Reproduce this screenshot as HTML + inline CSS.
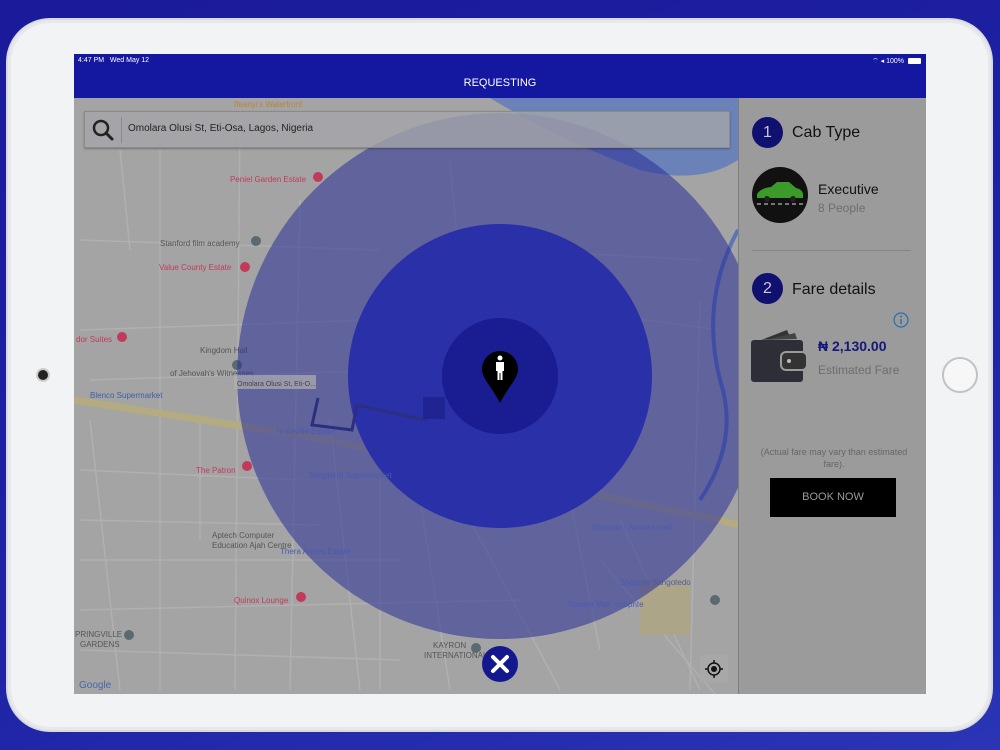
<!DOCTYPE html>
<html><head><meta charset="utf-8">
<style>
*{margin:0;padding:0;box-sizing:border-box}
html,body{width:1000px;height:750px;overflow:hidden;font-family:"Liberation Sans",sans-serif}
body{background:linear-gradient(160deg,#1a1a9a 0%,#1f23a6 60%,#2a35b5 100%);position:relative}
.ipad{position:absolute;left:8px;top:20px;width:983px;height:710px;background:#f2f3f5;border-radius:42px;box-shadow:0 0 0 2px #d8dae0,inset 0 0 0 3px #e6e8ec}
.cam{position:absolute;left:30px;top:350px;width:10px;height:10px;border-radius:50%;background:#222;box-shadow:0 0 0 2px #ccc}
.home{position:absolute;left:934px;top:337px;width:36px;height:36px;border-radius:50%;border:2px solid #bfc2c8;background:#f7f7f7}
.screen{position:absolute;left:74px;top:54px;width:852px;height:640px;overflow:hidden;background:#a6a6a6}
.bar{position:absolute;left:0;top:0;width:852px;height:44px;background:#1418a0;color:#fff}
.status{position:absolute;top:3px;font-size:7px}
.title{position:absolute;top:23px;width:100%;text-align:center;font-size:11px}
.map{position:absolute;left:0;top:44px;width:664px;height:596px;overflow:hidden}
.side{position:absolute;left:664px;top:44px;width:188px;height:596px;background:#9b9b9b;border-left:1px solid #7d7d7d}
.num{position:absolute;width:31px;height:31px;border-radius:50%;background:#101070;color:#c8c8d8;font-size:16px;text-align:center;line-height:31px}
.h{position:absolute;font-size:16px;color:#111;font-weight:500}
.search{position:absolute;left:10px;top:13px;width:646px;height:37px;background:rgba(165,165,170,.8);border:1px solid #8a8a8a;box-shadow:0 1px 2px rgba(0,0,0,.3)}
</style></head><body>
<div class="ipad"><div class="cam"></div><div class="home"></div></div>
<div class="screen">
 <div class="map">
  <svg width="664" height="596" viewBox="74 98 664 596" style="position:absolute;left:0;top:0" font-family="Liberation Sans">
   <rect x="74" y="98" width="664" height="596" fill="#a4a4a4"/>
   <g stroke="#b0b0b0" stroke-width="1.5" fill="none">
    <path d="M160 150 L160 690 M240 110 L235 690 M300 200 L290 690 M80 240 L380 250 M80 330 L370 320 M90 380 L400 370 M80 470 L300 480 M80 520 L320 525 M80 560 L400 560 M80 610 L520 600 M80 650 L400 660 M380 480 L380 690 M420 500 L450 690 M560 450 L600 650 M620 520 L700 690 M120 150 L130 250 M200 420 L200 540 M330 420 L360 690 M450 160 L470 380 M520 250 L700 260 M500 300 L720 330 M600 560 L720 700 M700 300 L690 690 M90 420 L120 690 M470 520 L560 690"/>
   </g>
   <path d="M74 400 L300 435 L720 520 L738 525" stroke="#b5ab80" stroke-width="7" fill="none"/>
   <path d="M490 98 Q560 140 640 170 Q700 185 738 160 L738 98 Z" fill="#6a82b8"/>
   <path d="M738 230 Q700 300 720 380 Q740 440 700 500" stroke="#5a74b4" stroke-width="4" fill="none"/>
   <rect x="640" y="580" width="50" height="55" fill="#aca587"/>
   <g font-size="8" fill="#555">
    <text x="160" y="246">Stanford film academy</text>
    <text x="200" y="353">Kingdom Hall</text><text x="170" y="376">of Jehovah's Witnesses...</text>
    <text x="90" y="398" fill="#3a5fa8">Blenco Supermarket</text>
    <text x="212" y="538">Aptech Computer</text><text x="212" y="548">Education Ajah Centre</text>
    <text x="433" y="648">KAYRON</text><text x="424" y="658">INTERNATIONAL</text>
    <text x="75" y="637">PRINGVILLE</text><text x="80" y="647">GARDENS</text>
   </g>
   <g font-size="8" fill="#c23a5a">
    <text x="230" y="182">Peniel Garden Estate</text>
    <text x="159" y="270">Value County Estate</text>
    <text x="76" y="342">dor Suites</text>
    <text x="196" y="473">The Patron</text>
    <text x="234" y="603">Quinox Lounge</text>
    <text x="234" y="107" fill="#b9843a">Ifeanyi's Waterfront</text>
   </g>
   <g fill="#c23a5a"><circle cx="318" cy="177" r="5"/><circle cx="245" cy="267" r="5"/><circle cx="122" cy="337" r="5"/><circle cx="247" cy="466" r="5"/><circle cx="301" cy="597" r="5"/></g>
   <g fill="#5a6a70"><circle cx="256" cy="241" r="5"/><circle cx="237" cy="365" r="5"/><circle cx="129" cy="635" r="5"/><circle cx="476" cy="648" r="5"/><circle cx="715" cy="600" r="5"/></g>
   <text x="79" y="688" font-size="10" fill="#4466aa">Google</text>
   <circle cx="500" cy="376" r="263" fill="#2a2e98" fill-opacity="0.55"/>
   <circle cx="500" cy="376" r="152" fill="#2a30a8"/>
   <circle cx="500" cy="376" r="58" fill="#1a1d92"/>
   <g font-size="8" fill="#4a5ab0">
    <text x="308" y="478">Templehill Supermarket</text>
    <text x="280" y="554">Thera Annex Estate</text>
    <text x="276" y="434">Hopeville Estate</text>
    <text x="592" y="530">Shoprite - Novare mall</text>
    <text x="620" y="585">Shoprite Sangotedo</text>
    <text x="568" y="607">Novare Mall, shoprite</text>
   </g>
   <path d="M318 398 L312 425 L352 430 L357 405 L425 420 L428 400" stroke="#2a2f80" stroke-width="3" fill="none"/>
   <rect x="423" y="397" width="22" height="22" fill="#1f2490"/>
   <rect x="234" y="375" width="82" height="14" fill="#b0b0b0" fill-opacity=".7"/>
   <text x="237" y="386" font-size="7" fill="#444">Omolara Olusi St, Eti-O...</text>
   <path d="M500 351 a18 18 0 0 1 18 18 c0 10 -10 18 -18 34 c-8 -16 -18 -24 -18 -34 a18 18 0 0 1 18 -18z" fill="#000"/>
   <circle cx="500" cy="358" r="2.5" fill="#fff"/>
   <path d="M496 362 h8 v9 h-1.5 v9 h-2 v-7 h-1 v7 h-2 v-9 h-1.5z" fill="#fff"/>
   <circle cx="500" cy="664" r="18" fill="#14188e"/>
   <path d="M493 657 L507 671 M507 657 L493 671" stroke="#fff" stroke-width="4" stroke-linecap="round"/>
   <rect x="700" y="655" width="28" height="28" fill="#a8a8a8"/>
   <circle cx="714" cy="669" r="6" fill="none" stroke="#111" stroke-width="1.5"/><circle cx="714" cy="669" r="3" fill="#111"/>
   <path d="M714 660 v3 M714 675 v3 M705 669 h3 M720 669 h3" stroke="#111" stroke-width="1.5"/>
  </svg>
  <div class="search">
   <svg width="36" height="36" style="position:absolute;left:0;top:0"><circle cx="16" cy="16" r="7" fill="none" stroke="#222" stroke-width="2.5"/><path d="M21 21 L27 27" stroke="#222" stroke-width="3" stroke-linecap="round"/></svg>
   <div style="position:absolute;left:36px;top:5px;width:1px;height:26px;background:#8a8a8a"></div>
   <div style="position:absolute;left:43px;top:11px;font-size:10px;color:#222">Omolara Olusi St, Eti-Osa, Lagos, Nigeria</div>
  </div>
 </div>
 <div class="side">
  <div class="num" style="left:13px;top:19px">1</div>
  <div class="h" style="left:53px;top:26px">Cab Type</div>
  <svg width="58" height="58" style="position:absolute;left:12px;top:68px"><circle cx="29" cy="29" r="28" fill="#111"/><path d="M6 28 q4 -6 14 -7 l6 -5 h12 l7 6 q6 1 7 6 v4 h-46z" fill="#3c9a2a"/><circle cx="16" cy="33" r="3" fill="#222"/><circle cx="42" cy="33" r="3" fill="#222"/><path d="M6 38 h46" stroke="#ddd" stroke-width="1" stroke-dasharray="4 3"/></svg>
  <div style="position:absolute;left:79px;top:83px;font-size:14px;color:#111;font-weight:500">Executive</div>
  <div style="position:absolute;left:79px;top:103px;font-size:12px;color:#6e6e6e">8 People</div>
  <div style="position:absolute;left:13px;top:152px;width:159px;height:1px;background:#858585"></div>
  <div class="num" style="left:13px;top:175px">2</div>
  <div class="h" style="left:53px;top:183px">Fare details</div>
  <svg width="16" height="16" style="position:absolute;left:154px;top:214px"><circle cx="8" cy="8" r="7" fill="none" stroke="#2a6cb0" stroke-width="1.2"/><path d="M8 7 v5" stroke="#2a6cb0" stroke-width="1.4"/><circle cx="8" cy="4.5" r="1" fill="#2a6cb0"/></svg>
  <svg width="58" height="56" style="position:absolute;left:12px;top:230px"><path d="M10 12 L36 2 L39 9 Z" fill="#333"/><path d="M14 12 L44 5 L46 11 Z" fill="#444"/><rect x="0" y="12" width="52" height="42" rx="3" fill="#2e2e38"/><rect x="30" y="24" width="26" height="18" rx="5" fill="#333" stroke="#9b9b9b" stroke-width="2"/><circle cx="38" cy="33" r="2" fill="#bbb"/></svg>
  <div style="position:absolute;left:79px;top:240px;font-size:14px;color:#14187a;font-weight:bold">₦ 2,130.00</div>
  <div style="position:absolute;left:79px;top:265px;font-size:12px;color:#6e6e6e">Estimated Fare</div>
  <div style="position:absolute;left:20px;top:348px;width:150px;text-align:center;font-size:9px;color:#666;line-height:12px">(Actual fare may vary than estimated fare).</div>
  <div style="position:absolute;left:31px;top:380px;width:126px;height:39px;background:#000;color:#9a9a9a;font-size:11px;text-align:center;line-height:39px">BOOK NOW</div>
 </div>
 <div class="bar">
  <div class="status" style="left:4px">4:47 PM&nbsp;&nbsp;&nbsp;Wed May 12</div>
  <div class="status" style="right:22px">⌔ ◂ 100%</div>
  <div style="position:absolute;right:5px;top:4px;width:13px;height:6px;background:#fff;border-radius:1px"></div>
  <div class="title">REQUESTING</div>
 </div>
</div>
</body></html>
